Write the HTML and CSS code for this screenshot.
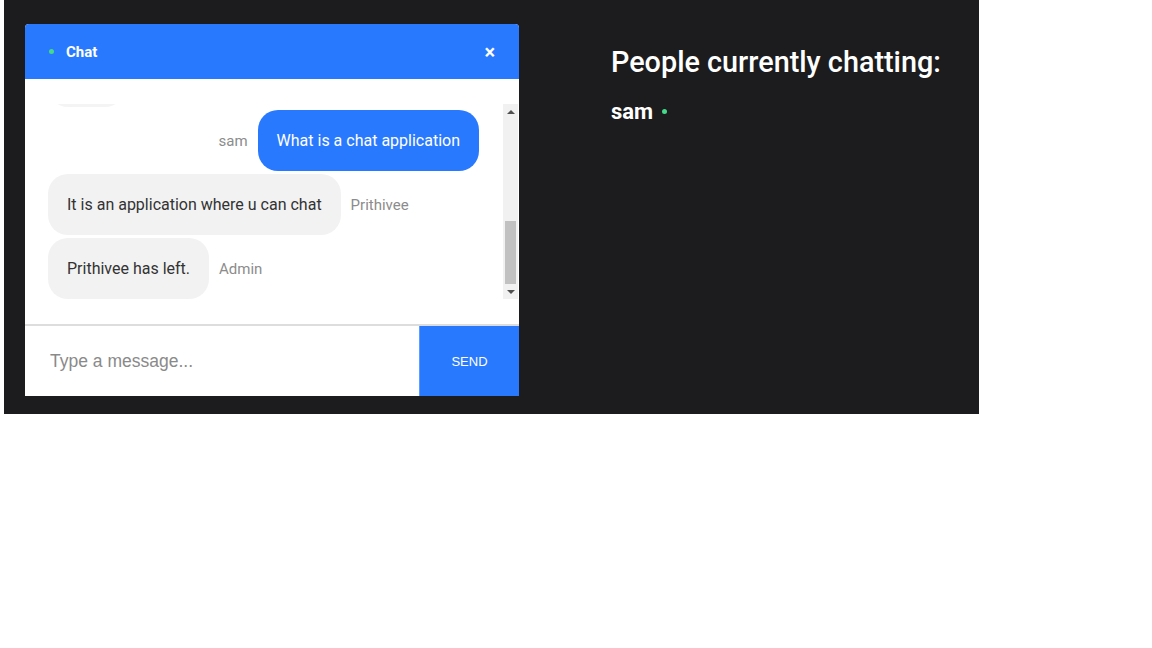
FILE: index.html
```html
<!DOCTYPE html>
<html lang="en">
<head>
<meta charset="utf-8">
<title>Chat</title>
<link rel="stylesheet" href="styles.css">
</head>
<body>
<div class="app">
  <section class="chat">
    <header class="chat-header">
      <span class="status-dot"></span>
      <span class="chat-title">Chat</span>
      <span class="close">&#215;</span>
    </header>
    <div class="messages-wrap">
      <div class="messages">
        <div class="messages-inner">
          <div class="msg"><div class="bubble bubble-faded"></div></div>
          <div class="msg mine"><span class="who">sam</span><div class="bubble">What is a chat application</div></div>
          <div class="msg"><div class="bubble">It is an application where u can chat</div><span class="who">Prithivee</span></div>
          <div class="msg"><div class="bubble">Prithivee has left.</div><span class="who">Admin</span></div>
        </div>
      </div>
      <div class="scrollbar">
        <div class="sb-btn"><span class="arrow-up"></span></div>
        <div class="sb-track"><div class="sb-thumb"></div></div>
        <div class="sb-btn"><span class="arrow-down"></span></div>
      </div>
    </div>
    <form class="composer">
      <input class="composer-input" type="text" placeholder="Type a message...">
      <button class="send" type="button">SEND</button>
    </form>
  </section>
  <aside class="people">
    <h1 class="people-title">People currently chatting:</h1>
    <div class="person"><span class="person-name">sam</span><span class="status-dot"></span></div>
  </aside>
</div>
</body>
</html>
```
FILE: styles.css
```css
* { box-sizing: border-box; }
body {
  margin: 0;
  background: #ffffff;
  font-family: Roboto, "Noto Sans", sans-serif;
}
.app {
  margin-left: 4px;
  width: 975px;
  height: 414px;
  background: #1c1c1e;
  display: flex;
  align-items: flex-start;
  gap: 92px;
  padding: 24px 0 0 21px;
}
.chat {
  width: 494px;
  background: #ffffff;
  border-radius: 4px 4px 0 0;
  overflow: hidden;
}
.chat-header {
  height: 55px;
  background: #2979ff;
  color: #ffffff;
  display: flex;
  align-items: center;
  padding: 0 24px 0 24px;
}
.status-dot {
  width: 5px;
  height: 5px;
  border-radius: 50%;
  background: #45d98a;
  flex: none;
}
.chat-title {
  margin-left: 12px;
  font-weight: 700;
  font-size: 15px;
  flex: 1;
}
.close {
  font-size: 20px;
  font-weight: 700;
  line-height: 1;
}
.messages-wrap {
  height: 247px;
  padding: 25px 1px 25px 0;
  border-bottom: 2px solid #dddddd;
  display: flex;
}
.messages {
  flex: 1;
  height: 195px;
  overflow: hidden;
  display: flex;
  flex-direction: column-reverse;
  padding: 0 24px 0 23px;
}
.messages-inner {
  display: flex;
  flex-direction: column;
  gap: 3px;
}
.msg {
  display: flex;
  align-items: center;
  gap: 10px;
}
.msg.mine { justify-content: flex-end; }
.bubble {
  background: #f2f2f2;
  color: #333333;
  font-size: 16px;
  line-height: 21px;
  padding: 20px 19px;
  border-radius: 20px;
  white-space: nowrap;
}
.bubble-faded {
  width: 77px;
  height: 61px;
  background: #f4f4f4;
}
.mine .bubble {
  background: #2979ff;
  color: #ffffff;
}
.who {
  font-size: 15px;
  color: #8c8c8c;
}
.scrollbar {
  width: 15px;
  height: 195px;
  background: #f1f1f1;
  display: flex;
  flex-direction: column;
}
.sb-btn {
  height: 15px;
  display: flex;
  align-items: center;
  justify-content: center;
}
.arrow-up, .arrow-down {
  width: 0;
  height: 0;
  border-left: 4px solid transparent;
  border-right: 4px solid transparent;
}
.arrow-up { border-bottom: 4px solid #505050; }
.arrow-down { border-top: 4px solid #505050; }
.sb-track {
  flex: 1;
  display: flex;
  flex-direction: column;
  justify-content: flex-end;
  padding: 0 2px;
}
.sb-thumb {
  height: 63px;
  background: #c1c1c1;
}
.composer {
  display: flex;
  height: 70px;
  margin: 0;
}
.composer-input {
  flex: 1;
  min-width: 0;
  border: none;
  outline: none;
  padding: 0 0 0 25px;
  font-family: "Liberation Sans", Arial, sans-serif;
  font-size: 17.5px;
  color: #333;
  background: #ffffff;
}
.composer-input::placeholder { color: #8a8a8a; }
.send {
  width: 100px;
  border: none;
  border-left: 1px solid #5c9bff;
  background: #2979ff;
  color: #ffffff;
  font-family: "Liberation Sans", Arial, sans-serif;
  font-size: 13px;
  padding: 0;
}
.people { color: #ffffff; }
.people-title {
  margin: 21px 0 0 0;
  font-size: 28.8px;
  font-weight: 500;
  line-height: 34px;
}
.person {
  display: flex;
  align-items: center;
  gap: 9px;
  margin-top: 20px;
}
.person-name {
  font-size: 22px;
  font-weight: 700;
}
```
